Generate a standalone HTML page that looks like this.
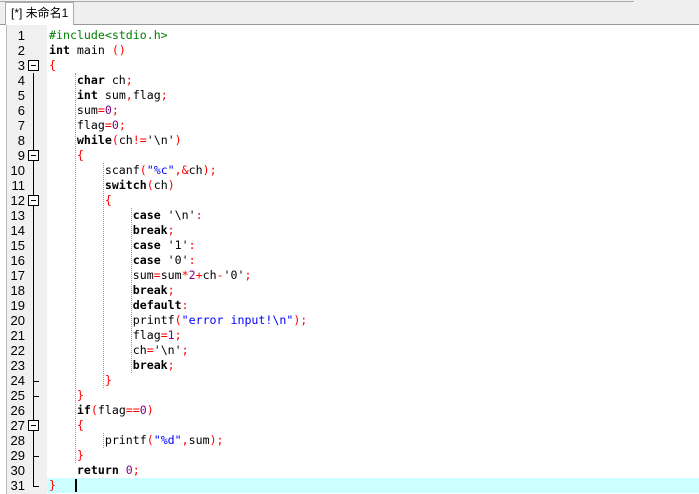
<!DOCTYPE html>
<html><head><meta charset="utf-8"><style>
body{margin:0;width:699px;height:494px;overflow:hidden;background:#fff;position:relative;font-family:"DejaVu Sans Mono",monospace;}
#top{position:absolute;left:0;top:0;width:699px;height:24px;background:#efefef;border-bottom:1px solid #999;}
#topline{position:absolute;left:0;top:0;width:634px;height:1px;border-bottom:1px solid #aaa;}
#tab{position:absolute;left:5px;top:2px;width:69px;height:23px;background:#fff;border:1px solid #aaa;border-bottom:none;font:12px "Liberation Sans","Noto Sans CJK SC",sans-serif;line-height:20px;padding-left:5px;box-sizing:border-box;color:#000}
#gut{position:absolute;left:6px;top:25px;width:40px;height:469px;background:#f0f0f0;border-left:1px solid #bbb;}
.ln{position:absolute;left:6px;width:19px;text-align:right;font:13px "Liberation Sans",sans-serif;color:#000;line-height:15px;}
.code{position:absolute;left:49px;font-size:11.6px;line-height:15px;white-space:pre;color:#000}
b{font-weight:bold}
.r{color:#f00}.g{color:#008000}.p{color:#800080}.bl{color:#00f}
.cur{position:absolute;left:47px;top:478px;width:652px;height:15px;background:#ccffff}
.guide{position:absolute;width:0;border-left:1px dotted #999}
.fold{position:absolute;left:28px;width:11px;height:11px;border:1px solid #000;background:#fff;box-sizing:border-box}
.fold:after{content:"";position:absolute;left:2px;top:4px;width:5px;height:1px;background:#000}
.vl{position:absolute;left:33px;width:1px;background:#000}
.tk{position:absolute;left:33px;width:6px;height:1px;background:#000}
</style></head><body>
<div id="top"></div><div id="topline"></div>
<div id="tab">[*] 未命名1</div>
<div id="gut"></div>
<div class="cur"></div>
<div style="position:absolute;left:75px;top:479px;width:2px;height:13px;background:#000"></div>
<div class="guide" style="left:75px;top:73px;height:390px"></div>
<div class="guide" style="left:103px;top:163px;height:225px"></div>
<div class="guide" style="left:131px;top:208px;height:165px"></div>
<div class="guide" style="left:103px;top:433px;height:15px"></div>
<div class="vl" style="top:73px;height:413px"></div>
<div class="tk" style="top:381px"></div>
<div class="tk" style="top:396px"></div>
<div class="tk" style="top:456px"></div>
<div class="tk" style="top:486px"></div>
<div class="fold" style="top:60px"></div>
<div class="fold" style="top:150px"></div>
<div class="fold" style="top:195px"></div>
<div class="fold" style="top:420px"></div>
<div class="code" style="top:28px"><span class="g">#include&lt;stdio.h&gt;</span>
<b>int</b> main <span class="r">()</span>
<span class="r">{</span>
    <b>char</b> ch<span class="r">;</span>
    <b>int</b> sum<span class="r">,</span>flag<span class="r">;</span>
    sum<span class="r">=</span><span class="p">0</span><span class="r">;</span>
    flag<span class="r">=</span><span class="p">0</span><span class="r">;</span>
    <b>while</b><span class="r">(</span>ch<span class="r">!=</span>'\n'<span class="r">)</span>
    <span class="r">{</span>
        scanf<span class="r">(</span><span class="bl">"%c"</span><span class="r">,&amp;</span>ch<span class="r">);</span>
        <b>switch</b><span class="r">(</span>ch<span class="r">)</span>
        <span class="r">{</span>
            <b>case</b> '\n'<span class="r">:</span>
            <b>break</b><span class="r">;</span>
            <b>case</b> '1'<span class="r">:</span>
            <b>case</b> '0'<span class="r">:</span>
            sum<span class="r">=</span>sum<span class="r">*</span><span class="p">2</span><span class="r">+</span>ch<span class="r">-</span>'0'<span class="r">;</span>
            <b>break</b><span class="r">;</span>
            <b>default</b><span class="r">:</span>
            printf<span class="r">(</span><span class="bl">"error input!\n"</span><span class="r">);</span>
            flag<span class="r">=</span><span class="p">1</span><span class="r">;</span>
            ch<span class="r">=</span>'\n'<span class="r">;</span>
            <b>break</b><span class="r">;</span>
        <span class="r">}</span>
    <span class="r">}</span>
    <b>if</b><span class="r">(</span>flag<span class="r">==</span><span class="p">0</span><span class="r">)</span>
    <span class="r">{</span>
        printf<span class="r">(</span><span class="bl">"%d"</span><span class="r">,</span>sum<span class="r">);</span>
    <span class="r">}</span>
    <b>return</b> <span class="p">0</span><span class="r">;</span>
<span class="r">}</span></div>
<div class="ln" style="top:28px">1<br>2<br>3<br>4<br>5<br>6<br>7<br>8<br>9<br>10<br>11<br>12<br>13<br>14<br>15<br>16<br>17<br>18<br>19<br>20<br>21<br>22<br>23<br>24<br>25<br>26<br>27<br>28<br>29<br>30<br>31</div>
</body></html>
